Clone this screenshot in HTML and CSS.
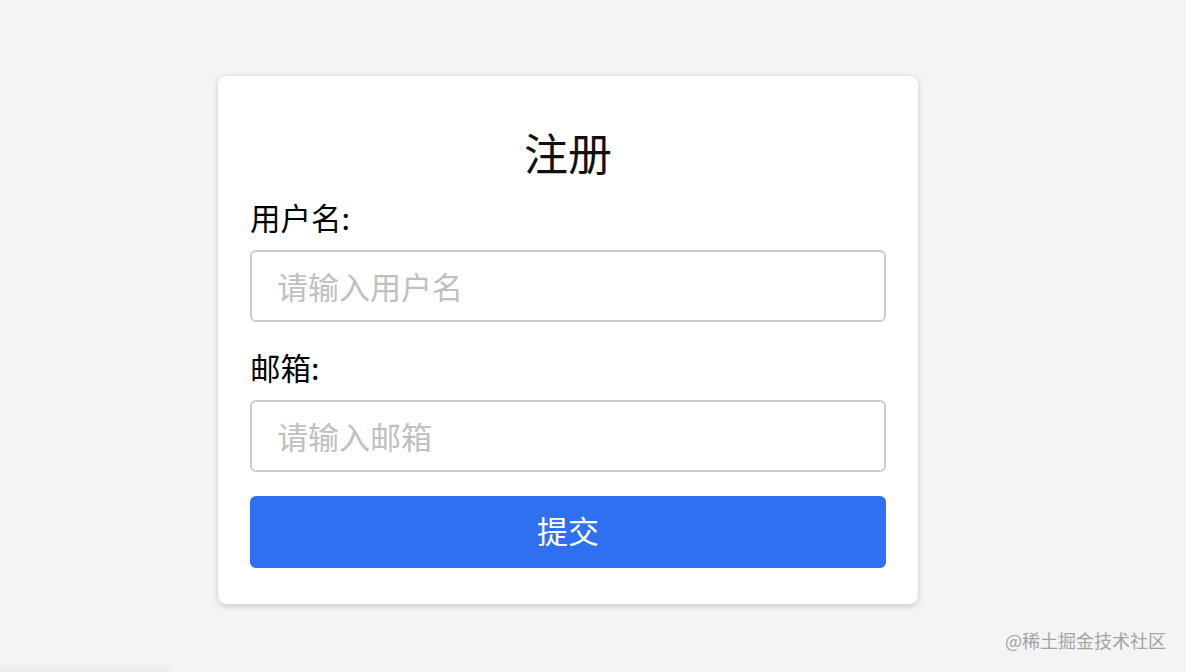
FILE: index.html
```html
<!DOCTYPE html>
<html lang="zh-CN">
<head>
<meta charset="utf-8">
<title>注册</title>
<link rel="stylesheet" href="styles.css">
</head>
<body>
<div class="page">
  <form class="card">
    <h2 class="title">注册</h2>
    <label class="label" for="username">用户名:</label>
    <input class="field" id="username" type="text" placeholder="请输入用户名">
    <label class="label label-second" for="email">邮箱:</label>
    <input class="field" id="email" type="email" placeholder="请输入邮箱">
    <button class="submit" type="button">提交</button>
  </form>
</div>
<div class="watermark">@稀土掘金技术社区</div>
<div class="corner-shade"></div>
</body>
</html>
```
FILE: styles.css
```css
* { box-sizing: border-box; }
html, body {
  margin: 0;
  height: 100%;
}
body {
  background: #f4f4f4;
  font-family: "Noto Sans CJK SC", "Noto Sans", sans-serif;
  color: #000;
  overflow: hidden;
  position: relative;
}
.page {
  padding: 76px 0 0 218px;
}
.card {
  width: 700px;
  background: #fff;
  border-radius: 8px;
  box-shadow: 0 2px 6px rgba(0, 0, 0, 0.18);
  padding: 32px 32px 36px;
  display: flex;
  flex-direction: column;
}
.title {
  margin: 16px 0 20px;
  font-size: 44px;
  line-height: 56px;
  font-weight: 400;
  text-align: center;
  color: #111;
}
.label {
  display: block;
  font-size: 30.5px;
  line-height: 34px;
  margin-bottom: 16px;
}
.label-second {
  margin-top: 28px;
}
.field {
  width: 636px;
  height: 72px;
  border: 2px solid #cbcbcb;
  border-radius: 6px;
  padding: 0 25px 2px;
  font-family: inherit;
  font-size: 31px;
  color: #000;
  outline: none;
  background: #fff;
}
.field::placeholder {
  color: #c0c0c0;
}
.submit {
  margin-top: 24px;
  width: 636px;
  height: 72px;
  border: none;
  border-radius: 6px;
  background: #2e70ef;
  color: #fff;
  font-family: inherit;
  font-size: 31px;
  padding: 0 0 5px;
  cursor: pointer;
}
.watermark {
  position: absolute;
  right: 20px;
  top: 628px;
  font-size: 18px;
  line-height: 24px;
  color: #a3a3a3;
}
.corner-shade {
  position: absolute;
  left: 0;
  bottom: 0;
  width: 170px;
  height: 10px;
  background: linear-gradient(to bottom, rgba(0,0,0,0), rgba(0,0,0,0.04));
  border-top-right-radius: 10px;
}
```
